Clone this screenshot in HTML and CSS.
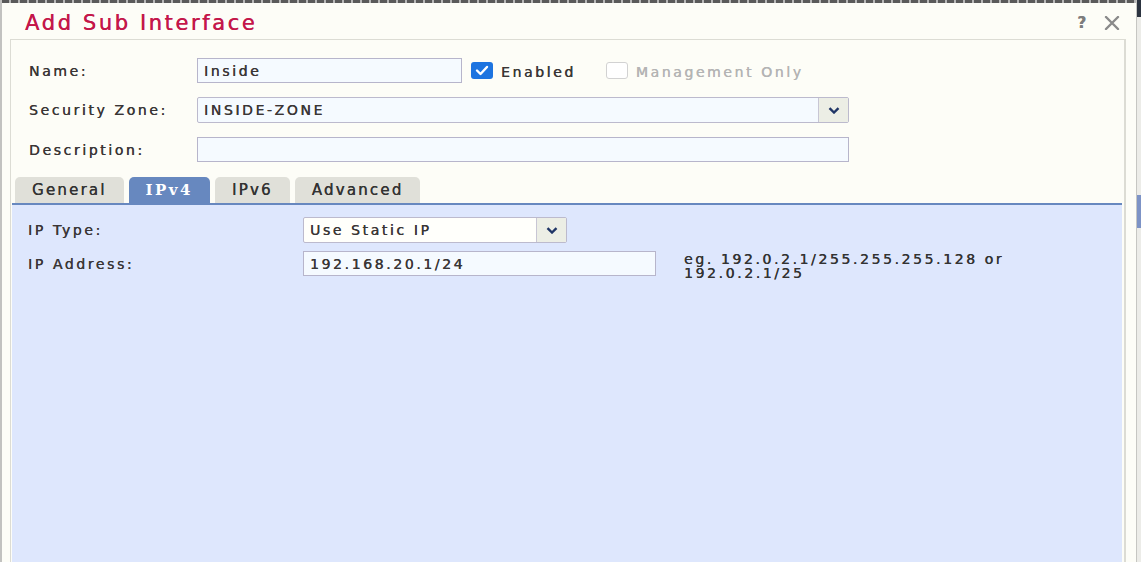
FILE: index.html
```html
<!DOCTYPE html>
<html lang="en">
<head>
  <meta charset="UTF-8" />
  <title>Add Sub Interface</title>
  <link rel="stylesheet" href="styles.css">
</head>
<body>
  <div class="frame">
    <div class="dialog">
      <div class="top-strip"></div>
      <div class="head">
        <h1 class="title">Add Sub Interface</h1>
        <div class="head-tools">
          <span class="help">?</span>
          <svg class="close" width="16" height="14" viewBox="0 0 16 14">
            <path d="M2 1 L14 13 M14 1 L2 13" stroke="#8a8a8a" stroke-width="2.4" stroke-linecap="round" fill="none"/>
          </svg>
        </div>
      </div>

      <div class="body">
        <div class="form">
          <div class="row">
            <label class="label">Name:</label>
            <div class="field name-field">Inside</div>
            <span class="check on">
              <svg width="14" height="11" viewBox="0 0 14 11"><path d="M2 5.5 L5.5 9 L12 2" stroke="#fff" stroke-width="2.4" fill="none" stroke-linecap="round" stroke-linejoin="round"/></svg>
            </span>
            <span class="check-text">Enabled</span>
            <span class="check off"></span>
            <span class="check-text muted">Management Only</span>
          </div>
          <div class="row">
            <label class="label">Security Zone:</label>
            <div class="select zone-select">
              <span class="select-value">INSIDE-ZONE</span>
              <span class="select-btn">
                <svg width="12" height="7" viewBox="0 0 12 7"><path d="M1.5 1.2 L6 5.5 L10.5 1.2" stroke="#1f3566" stroke-width="2.4" fill="none"/></svg>
              </span>
            </div>
          </div>
          <div class="row">
            <label class="label">Description:</label>
            <div class="field desc-field"></div>
          </div>
        </div>

        <div class="tabs">
          <span class="tab">General</span>
          <span class="tab active">IPv4</span>
          <span class="tab">IPv6</span>
          <span class="tab">Advanced</span>
        </div>

        <div class="panel">
          <div class="row">
            <label class="label wide">IP Type:</label>
            <div class="select type-select">
              <span class="select-value">Use Static IP</span>
              <span class="select-btn">
                <svg width="12" height="7" viewBox="0 0 12 7"><path d="M1.5 1.2 L6 5.5 L10.5 1.2" stroke="#1f3566" stroke-width="2.4" fill="none"/></svg>
              </span>
            </div>
          </div>
          <div class="row">
            <label class="label wide">IP Address:</label>
            <div class="field ip-field">192.168.20.1/24</div>
            <p class="hint">eg. 192.0.2.1/255.255.255.128 or<br>192.0.2.1/25</p>
          </div>
        </div>
      </div>
    </div>
    <div class="side">
      <div class="side-top"></div>
      <div class="side-thumb"></div>
    </div>
  </div>
</body>
</html>
```

FILE: styles.css
```css
body {
  margin: 0;
  background: #fdfdf7;
  font-family: "DejaVu Sans", Verdana, sans-serif;
  font-size: 14px;
  letter-spacing: 2.6px;
  color: #3a3636;
  text-shadow: 0.35px 0 0 currentColor;
}
.frame {
  display: flex;
  height: 562px;
  overflow: hidden;
}
.dialog {
  width: 1134px;
  flex: none;
  display: flex;
  flex-direction: column;
  border-left: 2px solid #c2c2c0;
}
.top-strip {
  height: 3px;
  background: repeating-linear-gradient(90deg, #5a5a5a 0 7px, #b8b8b8 7px 9px);
}
.head {
  height: 36px;
  display: flex;
  align-items: center;
  justify-content: space-between;
  padding: 4px 16px 0 23px;
  box-sizing: border-box;
}
.title {
  margin: 0;
  font-size: 21px;
  font-weight: normal;
  letter-spacing: 2.6px;
  color: #c4174a;
  line-height: 24px;
}
.head-tools {
  display: flex;
  align-items: center;
  gap: 18px;
}
.help {
  font-size: 15px;
  font-weight: bold;
  color: #7d7d7d;
  letter-spacing: 0;
}
.body {
  flex: 1;
  margin-left: 8px;
  width: 1116px;
  box-sizing: border-box;
  border: 1px solid #dcdcd4;
  border-right-width: 2px;
  border-bottom: none;
  display: flex;
  flex-direction: column;
}
.form {
  padding: 18px 18px 0 18px;
  display: flex;
  flex-direction: column;
  gap: 14px;
}
.row {
  display: flex;
  align-items: center;
}
.label {
  width: 168px;
  flex: none;
}
.label.wide {
  width: 275px;
}
.field {
  height: 25px;
  box-sizing: border-box;
  border: 1px solid #b7b5cb;
  background: #f5faff;
  padding: 0 6px;
  line-height: 24px;
}
.name-field {
  width: 265px;
}
.desc-field {
  width: 652px;
}
.ip-field {
  width: 353px;
}
.check {
  width: 22px;
  height: 17px;
  box-sizing: border-box;
  border-radius: 3px;
  display: flex;
  align-items: center;
  justify-content: center;
}
.check.on {
  margin-left: 9px;
  background: #1d74e0;
}
.check.off {
  margin-left: 30px;
  border: 1px solid #d2d2d2;
  background: #fff;
}
.check-text {
  margin-left: 8px;
  padding-top: 3px;
}
.check-text.muted {
  color: #b4b4b4;
}
.select {
  height: 26px;
  box-sizing: border-box;
  border: 1px solid #bcbacd;
  background: #f5faff;
  display: flex;
  border-radius: 2px;
}
.zone-select {
  width: 652px;
}
.type-select {
  width: 264px;
  background: #fffffb;
}
.select-value {
  flex: 1;
  padding: 0 6px;
  line-height: 25px;
}
.select-btn {
  width: 29px;
  border-left: 1px solid #c8c6d4;
  background: #eceee5;
  display: flex;
  align-items: center;
  justify-content: center;
}
.tabs {
  display: flex;
  gap: 5px;
  padding: 15px 0 0 4px;
}
.tab {
  height: 26px;
  padding: 0 17px;
  background: #e0e0d9;
  border-radius: 5px 5px 0 0;
  font-size: 15px;
  letter-spacing: 2.2px;
  line-height: 27px;
  color: #333;
}
.tab.active {
  background: #6788bf;
  color: #fff;
  font-weight: bold;
  font-family: "DejaVu Serif", serif;
  letter-spacing: 2.5px;
  text-shadow: none;
}
.panel {
  flex: 1;
  margin: 0 2px 0 1px;
  border-top: 2px solid #6788bf;
  background: #dee7fd;
  padding: 12px 16px 0 16px;
  display: flex;
  flex-direction: column;
  gap: 8px;
}
.hint {
  margin: 0 0 0 28px;
  align-self: flex-start;
  height: 25px;
  box-sizing: border-box;
  padding-top: 1px;
  line-height: 14px;
  color: #333;
}
.side {
  flex: 1;
  border-left: 1px solid #c6c6c2;
  background: #ecece8;
  display: flex;
  flex-direction: column;
}
.side-top {
  height: 17px;
  background: #2c3440;
}
.side-thumb {
  margin-top: 178px;
  height: 33px;
  background: #7d93c6;
}
```
